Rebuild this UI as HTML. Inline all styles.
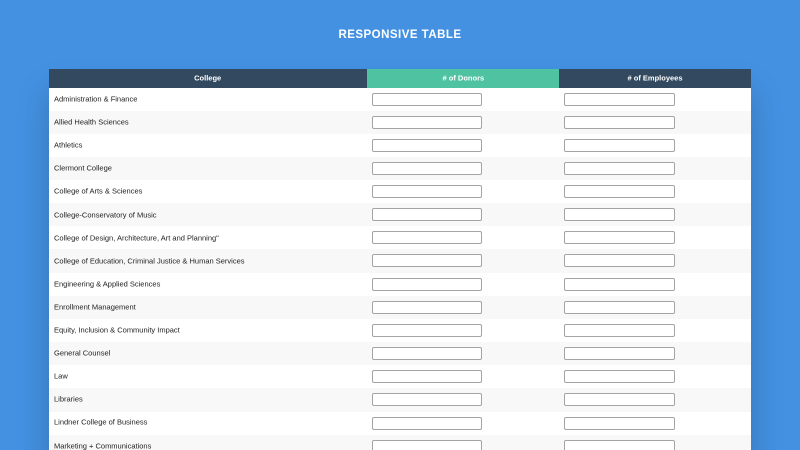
<!DOCTYPE html>
<html>
<head>
<meta charset="utf-8">
<style>
html,body{margin:0;padding:0;width:800px;height:450px;overflow:hidden;background:#4491e2;font-family:"Liberation Sans",sans-serif;}
.p{position:relative;width:800px;height:450px;overflow:hidden;background:#4491e2;}
h1{position:absolute;left:0;top:27px;width:800px;margin:0;text-align:center;color:#fff;font-size:11.5px;line-height:16px;font-weight:700;letter-spacing:.48px;filter:blur(.25px);}
.t{position:absolute;left:49px;top:69px;width:702px;height:400px;box-shadow:0 22px 31px rgba(0,0,0,.2);background:#fff;filter:blur(.25px);}
.h{display:flex;height:19px;line-height:19px;color:#fff;font-size:12px;font-weight:700;text-align:center;}
.h div:nth-child(1){width:318px;background:#324960;}
.h div:nth-child(2){width:192px;background:#4fc3a1;}
.h div:nth-child(3){width:192px;background:#324960;}
.h b{display:inline-block;transform:scale(.625);transform-origin:50% 50%;white-space:nowrap;}
.r{position:absolute;left:0;width:702px;height:24px;font-size:12px;line-height:23px;color:#222;background:#fff;}
.r:nth-child(odd){background:#f8f8f8;}
.r span{position:absolute;left:5px;top:0;white-space:nowrap;transform:scale(.625);transform-origin:0 50%;}
.r i{position:absolute;top:5px;height:11px;border:1px solid #a4a4a4;border-radius:2px;background:#fff;}
.a{left:323px;width:108.4px;}
.b{left:515px;width:109px;}
</style>
</head>
<body>
<div class="p">
<h1>RESPONSIVE TABLE</h1>
<div class="t">
<div class="h"><div><b>College</b></div><div><b># of Donors</b></div><div><b># of Employees</b></div></div>
<div class="r" style="top:19px"><span>Administration &amp; Finance</span><i class="a"></i><i class="b"></i></div>
<div class="r" style="top:42px"><span>Allied Health Sciences</span><i class="a"></i><i class="b"></i></div>
<div class="r" style="top:65px"><span>Athletics</span><i class="a"></i><i class="b"></i></div>
<div class="r" style="top:88px"><span>Clermont College</span><i class="a"></i><i class="b"></i></div>
<div class="r" style="top:111px"><span>College of Arts &amp; Sciences</span><i class="a"></i><i class="b"></i></div>
<div class="r" style="top:134px"><span style="top:1px">College-Conservatory of Music</span><i class="a"></i><i class="b"></i></div>
<div class="r" style="top:157px"><span style="top:1px">College of Design, Architecture, Art and Planning"</span><i class="a"></i><i class="b"></i></div>
<div class="r" style="top:180px"><span style="top:1px">College of Education, Criminal Justice &amp; Human Services</span><i class="a"></i><i class="b"></i></div>
<div class="r" style="top:204px"><span>Engineering &amp; Applied Sciences</span><i class="a"></i><i class="b"></i></div>
<div class="r" style="top:227px"><span>Enrollment Management</span><i class="a"></i><i class="b"></i></div>
<div class="r" style="top:250px"><span>Equity, Inclusion &amp; Community Impact</span><i class="a"></i><i class="b"></i></div>
<div class="r" style="top:273px"><span>General Counsel</span><i class="a"></i><i class="b"></i></div>
<div class="r" style="top:296px"><span>Law</span><i class="a"></i><i class="b"></i></div>
<div class="r" style="top:319px"><span>Libraries</span><i class="a"></i><i class="b"></i></div>
<div class="r" style="top:343px"><span style="top:-1px">Lindner College of Business</span><i class="a"></i><i class="b"></i></div>
<div class="r" style="top:366px"><span>Marketing + Communications</span><i class="a"></i><i class="b"></i></div>
</div>
</div>
</body>
</html>
